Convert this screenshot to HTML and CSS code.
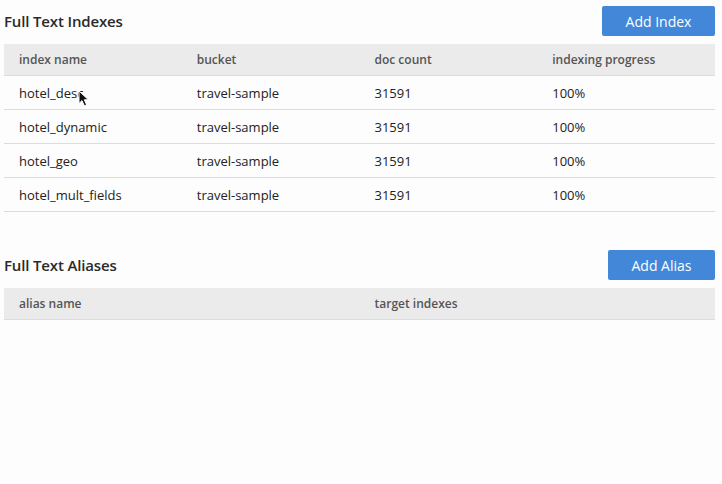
FILE: index.html
```html
<!DOCTYPE html>
<html>
<head>
<meta charset="utf-8">
<link rel="stylesheet" href="styles.css">
</head>
<body>
<div class="page">
  <section class="panel">
    <div class="panel-head">
      <h2 class="title">Full Text Indexes</h2>
      <button class="btn">Add Index</button>
    </div>
    <div class="table cols4">
      <div class="row head">
        <div class="cell">index name</div>
        <div class="cell">bucket</div>
        <div class="cell">doc count</div>
        <div class="cell">indexing progress</div>
      </div>
      <div class="row">
        <div class="cell name">hotel_desc<svg class="cursor" width="12" height="17" viewBox="0 0 12 17"><path d="M1 1 L1 13.5 L4 10.6 L6.3 15.8 L8.6 14.8 L6.3 9.8 L10.4 9.8 Z" fill="#111" stroke="#fff" stroke-width="1" stroke-linejoin="round"/></svg></div>
        <div class="cell">travel-sample</div>
        <div class="cell">31591</div>
        <div class="cell">100%</div>
      </div>
      <div class="row">
        <div class="cell">hotel_dynamic</div>
        <div class="cell">travel-sample</div>
        <div class="cell">31591</div>
        <div class="cell">100%</div>
      </div>
      <div class="row">
        <div class="cell">hotel_geo</div>
        <div class="cell">travel-sample</div>
        <div class="cell">31591</div>
        <div class="cell">100%</div>
      </div>
      <div class="row">
        <div class="cell">hotel_mult_fields</div>
        <div class="cell">travel-sample</div>
        <div class="cell">31591</div>
        <div class="cell">100%</div>
      </div>
    </div>
  </section>
  <section class="panel second">
    <div class="panel-head">
      <h2 class="title">Full Text Aliases</h2>
      <button class="btn">Add Alias</button>
    </div>
    <div class="table cols2">
      <div class="row head">
        <div class="cell">alias name</div>
        <div class="cell">target indexes</div>
      </div>
    </div>
  </section>
</div>
</body>
</html>
```
FILE: styles.css
```css
html, body {
  margin: 0;
  padding: 0;
  background: #fdfdfd;
}
body {
  font-family: "Open Sans", "Noto Sans", sans-serif;
  color: #222;
  width: 722px;
  height: 484px;
  overflow: hidden;
}
.page {
  padding: 6px 7px 0 4px;
}
.panel-head {
  display: flex;
  justify-content: space-between;
  align-items: center;
  height: 30px;
  margin-bottom: 8px;
}
.title {
  margin: 0;
  font-size: 15px;
  font-weight: 600;
  color: #2a2a2a;
  letter-spacing: -0.15px;
}
.btn {
  font-family: inherit;
  background: #4287d8;
  color: #fff;
  border: none;
  border-radius: 2px;
  height: 30px;
  font-size: 14px;
  padding: 0 16px;
  box-sizing: border-box;
}
.panel:first-child .btn { width: 113px; }
.second .btn { width: 107px; }
.second {
  margin-top: 38px;
}
.table .row {
  display: grid;
  height: 34px;
  align-items: center;
  border-bottom: 1px solid #dcdcdc;
  box-sizing: border-box;
  font-size: 13px;
}
.cols4 .row { grid-template-columns: repeat(4, 1fr); }
.cols2 .row { grid-template-columns: repeat(2, 1fr); }
.table .row.head {
  background: #ebebeb;
  height: 32px;
  color: #555;
  font-weight: 600;
  font-size: 12px;
}
.cell {
  padding-left: 15px;
}
.name {
  position: relative;
}
.cursor {
  position: absolute;
  left: 74px;
  top: 6px;
}
```
